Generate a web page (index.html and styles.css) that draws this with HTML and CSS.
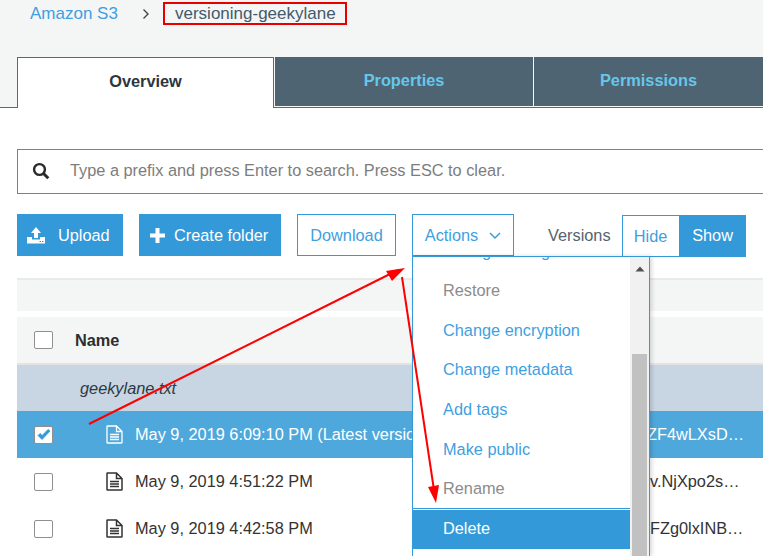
FILE: index.html
```html
<!DOCTYPE html>
<html lang="en">
<head>
<meta charset="utf-8">
<title>versioning-geekylane</title>
<link rel="stylesheet" href="styles.css">
</head>
<body>
<div class="page">
  <svg class="bg-shape" width="60" height="107" viewBox="0 0 60 107"><path d="M0 22 L42 28 L50 56 L17 57 L17 98 L0 86Z" fill="#f9fafa"/></svg>
  <header class="top">
    <nav class="crumbs">
      <a class="crumb-link">Amazon S3</a>
      <svg class="crumb-sep" width="8" height="12" viewBox="0 0 8 12"><path d="M1.5 1.5 L6 6 L1.5 10.5" fill="none" stroke="#444" stroke-width="1.4"/></svg>
      <span class="crumb-current">versioning-geekylane</span>
    </nav>
    <div class="tabs">
      <div class="tab tab-active">Overview</div>
      <div class="tab tab-a">Properties</div>
      <div class="tab tab-b">Permissions</div>
    </div>
  </header>
  <main class="content">
    <div class="search">
      <svg class="search-icon" width="18" height="18" viewBox="0 0 18 18"><circle cx="7.5" cy="7.5" r="5.4" fill="none" stroke="#2a2a2a" stroke-width="2.4"/><path d="M11.5 11.5 L16.3 16.3" stroke="#2a2a2a" stroke-width="3"/></svg>
      <span>Type a prefix and press Enter to search. Press ESC to clear.</span>
    </div>
    <div class="toolbar">
      <button class="btn btn-solid btn-upload">
        <svg width="18" height="17" viewBox="0 0 18 17"><path d="M9 0 L14 6 L11 6 L11 11 L7 11 L7 6 L4 6Z M0 10 L5 10 L5 12.500 L13 12.500 L13 10 L18 10 L18 16.500 L0 16.500Z" fill="#fff"/><path d="M12.500 14.500h1.500M15 14.500h1.500" stroke="#3399d9" stroke-width="1"/></svg>
        <span>Upload</span>
      </button>
      <button class="btn btn-solid btn-folder">
        <svg width="15" height="15" viewBox="0 0 15 15"><path d="M5.500 0h4v5.500H15v4H9.500V15h-4V9.500H0v-4h5.500Z" fill="#fff"/></svg>
        <span>Create folder</span>
      </button>
      <button class="btn btn-line btn-download">Download</button>
      <button class="btn btn-line btn-actions">
        <span>Actions</span>
        <svg width="12" height="7" viewBox="0 0 12 7"><path d="M1 1 L6 6 L11 1" fill="none" stroke="#3399d9" stroke-width="1.400"/></svg>
      </button>
      <span class="versions-label">Versions</span>
      <div class="toggle">
        <span class="toggle-hide">Hide</span>
        <span class="toggle-show">Show</span>
      </div>
    </div>
    <div class="band"></div>
    <div class="table">
      <div class="row row-head">
        <span class="check"></span>
        <span class="name-head">Name</span>
      </div>
      <div class="row row-group"><span class="group-name">geekylane.txt</span></div>
      <div class="row row-selected">
        <span class="check check-on">
          <svg width="14" height="12" viewBox="0 0 14 12"><path d="M1 6.500 L5 10.500 L13 2 L11 0.500 L5.200 6.500 L3 4.500Z" fill="#3399d9" stroke="#3399d9" stroke-width="0.800"/></svg>
        </span>
        <svg class="file" width="17" height="19" viewBox="0 0 17 19"><path d="M1 1.500 Q1 1 1.500 1 H10.500 L16 6.500 V17.500 Q16 18 15.500 18 H1.500 Q1 18 1 17.500Z M10.500 1 V6.500 H16 M4 9.500H13M4 12H13M4 14.500H13" fill="none" stroke="#fff" stroke-width="1.300"/></svg>
        <span class="version-date">May 9, 2019 6:09:10 PM (Latest version)</span>
        <span class="version-id id-first">ZF4wLXsD…</span>
      </div>
      <div class="row">
        <span class="check"></span>
        <svg class="file" width="17" height="19" viewBox="0 0 17 19"><path d="M1 1.500 Q1 1 1.500 1 H10.500 L16 6.500 V17.500 Q16 18 15.500 18 H1.500 Q1 18 1 17.500Z M10.500 1 V6.500 H16 M4 9.500H13M4 12H13M4 14.500H13" fill="none" stroke="#333" stroke-width="1.500"/></svg>
        <span class="version-date">May 9, 2019 4:51:22 PM</span>
        <span class="version-id">v.NjXpo2s…</span>
      </div>
      <div class="row">
        <span class="check"></span>
        <svg class="file" width="17" height="19" viewBox="0 0 17 19"><path d="M1 1.500 Q1 1 1.500 1 H10.500 L16 6.500 V17.500 Q16 18 15.500 18 H1.500 Q1 18 1 17.500Z M10.500 1 V6.500 H16 M4 9.500H13M4 12H13M4 14.500H13" fill="none" stroke="#333" stroke-width="1.500"/></svg>
        <span class="version-date">May 9, 2019 4:42:58 PM</span>
        <span class="version-id">FZg0lxINB…</span>
      </div>
    </div>
  </main>
  <div class="menu">
    <div class="menu-list">
      <div class="menu-item menu-clipped">Change storage class</div>
      <div class="menu-item menu-off">Restore</div>
      <div class="menu-item">Change encryption</div>
      <div class="menu-item">Change metadata</div>
      <div class="menu-item">Add tags</div>
      <div class="menu-item">Make public</div>
      <div class="menu-item menu-off">Rename</div>
      <div class="menu-item menu-delete">Delete</div>
    </div>
    <div class="scrollbar">
      <svg class="scroll-up" width="10" height="6" viewBox="0 0 10 6"><path d="M5 0.500 L9.500 5.500 H0.500Z" fill="#505050"/></svg>
      <div class="scroll-thumb"></div>
    </div>
  </div>
  <svg class="arrows" width="763" height="556" viewBox="0 0 763 556">
    <path d="M89 424 L398 270" stroke="#f00" stroke-width="2" fill="none"/>
    <path d="M405 268 L386 271 L392 281Z" fill="#f00"/>
    <path d="M402 277 L434 490" stroke="#f00" stroke-width="2" fill="none"/>
    <path d="M436 503 L428 487 L439 485Z" fill="#f00"/>
  </svg>
</div>
</body>
</html>
```

FILE: styles.css
```css
* { box-sizing: border-box; }
html, body { margin: 0; padding: 0; }
body { font-family: "Liberation Sans", Arial, sans-serif; color: #333; background: #fff; }
.page { position: relative; width: 763px; height: 556px; overflow: hidden; background: #fff; }
.bg-shape { position: absolute; left: 0; top: 0; }
.top { position: relative; height: 108px; background: #f4f6f6; }
.crumbs { display: flex; align-items: center; height: 25px; padding: 2px 0 0 30px; font-size: 17px; }
.crumb-link { color: #3f9fdf; width: 112px; }
.crumb-sep { margin-left: 0; }
.crumb-current { margin-left: 13px; width: 184px; height: 23px; line-height: 19px; padding-left: 10px; border: 2px solid #e80000; color: #44596b; white-space: nowrap; }
.tabs { display: flex; height: 51px; margin-top: 32px; padding-left: 17px; border-bottom: 1px solid #546b7a; position: relative; }
.tab { display: flex; align-items: center; justify-content: center; font-size: 16.320px; font-weight: 700; padding-bottom: 2px; }
.tab-active { width: 257px; height: 51px; background: #fff; color: #2b3640; border: 1px solid #546b7a; border-bottom: 0; padding-bottom: 3px; margin-right: 1px; }
.tab-a, .tab-b { background: #4f6473; color: #66c7ea; height: 49px; }
.tab-a { width: 258px; margin-right: 1px; }
.tab-b { flex: 1; }
.content { padding: 41px 0 0 17px; }
.search { display: flex; align-items: center; height: 45px; border: 1px solid #808080; border-right: 0; padding: 0 0 2px 14px; font-size: 16.320px; color: #7d7d7d; }
.search-icon { margin-right: 20px; }
.toolbar { display: flex; align-items: flex-start; margin-top: 20px; height: 44px; }
.btn { display: flex; align-items: center; height: 42px; padding: 0; font: 16.320px "Liberation Sans", Arial, sans-serif; border: 0; border-radius: 0; }
.btn-solid { background: #3399d9; color: #fff; }
.btn-line { background: #fff; color: #3f9fdf; border: 1px solid #3399d9; justify-content: center; }
.btn-upload { width: 106px; padding-left: 10px; margin-right: 16px; gap: 13px; }
.btn-folder { width: 142px; padding-left: 11px; margin-right: 16px; gap: 9px; }
.btn-download { width: 99px; margin-right: 16px; }
.btn-actions { width: 102px; gap: 11px; margin-right: 34px; }
.versions-label { font-size: 16.320px; color: #55636e; line-height: 42px; margin-right: 11px; }
.toggle { display: flex; height: 42px; margin-top: 1px; font-size: 16.320px; line-height: 40px; }
.toggle-hide { width: 58px; text-align: center; color: #3f9fdf; border: 1px solid #3399d9; }
.toggle-show { width: 66px; text-align: center; color: #fff; background: #3399d9; }
.band { height: 33px; margin-top: 20px; background: #f4f6f6; border-top: 2px solid #e9ebeb; }
.table { margin-top: 6px; }
.row { display: flex; align-items: center; height: 47px; padding-left: 17px; font-size: 16.320px; color: #333; position: relative; }
.row-head { height: 48px; background: #f4f6f6; border-bottom: 2px solid #e3e3e3; }
.row-group { height: 46px; background: #c8d5e2; }
.row-selected { background: #4fa8dc; color: #fff; }
.check { flex: none; display: flex; align-items: center; justify-content: center; width: 19px; height: 18px; background: #fff; border: 1px solid #8f8f8f; border-radius: 2px; margin-right: 53px; }
.name-head { font-weight: 700; margin-left: -31px; color: #2e2e2e; }
.group-name { font-style: italic; margin-left: 46px; color: #2e3a44; }
.file { flex: none; margin-right: 12px; }
.version-date { white-space: nowrap; width: 515px; flex: none; }
.version-id { white-space: nowrap; }
.id-first { margin-left: -3px; }
.menu { position: absolute; left: 412px; top: 256px; width: 238px; height: 300px; display: flex; background: #fff; border: 1px solid #3399d9; border-bottom: 0; box-shadow: 2px 0 4px rgba(0,0,0,.15); overflow: hidden; }
.menu-list { width: 217px; flex: none; margin-top: -25.400px; font-size: 16.320px; }
.menu-item { height: 39.600px; line-height: 39.600px; padding-left: 30px; color: #3f9fdf; white-space: nowrap; }
.menu-off { color: #8c8c8c; }
.menu-delete { margin-top: 1px; height: 39px; line-height: 37px; background: #3399d9; color: #fff; box-shadow: 0 -1px 0 #fff, 0 -2px 0 #3399d9; }
.scrollbar { position: relative; flex: 1; background: #f1f1f1; }
.scroll-up { position: absolute; left: 5px; top: 9px; }
.scroll-thumb { position: absolute; left: 2px; right: 2px; top: 97px; bottom: 0; background: #c1c1c1; }
.arrows { position: absolute; left: 0; top: 0; pointer-events: none; }
```
